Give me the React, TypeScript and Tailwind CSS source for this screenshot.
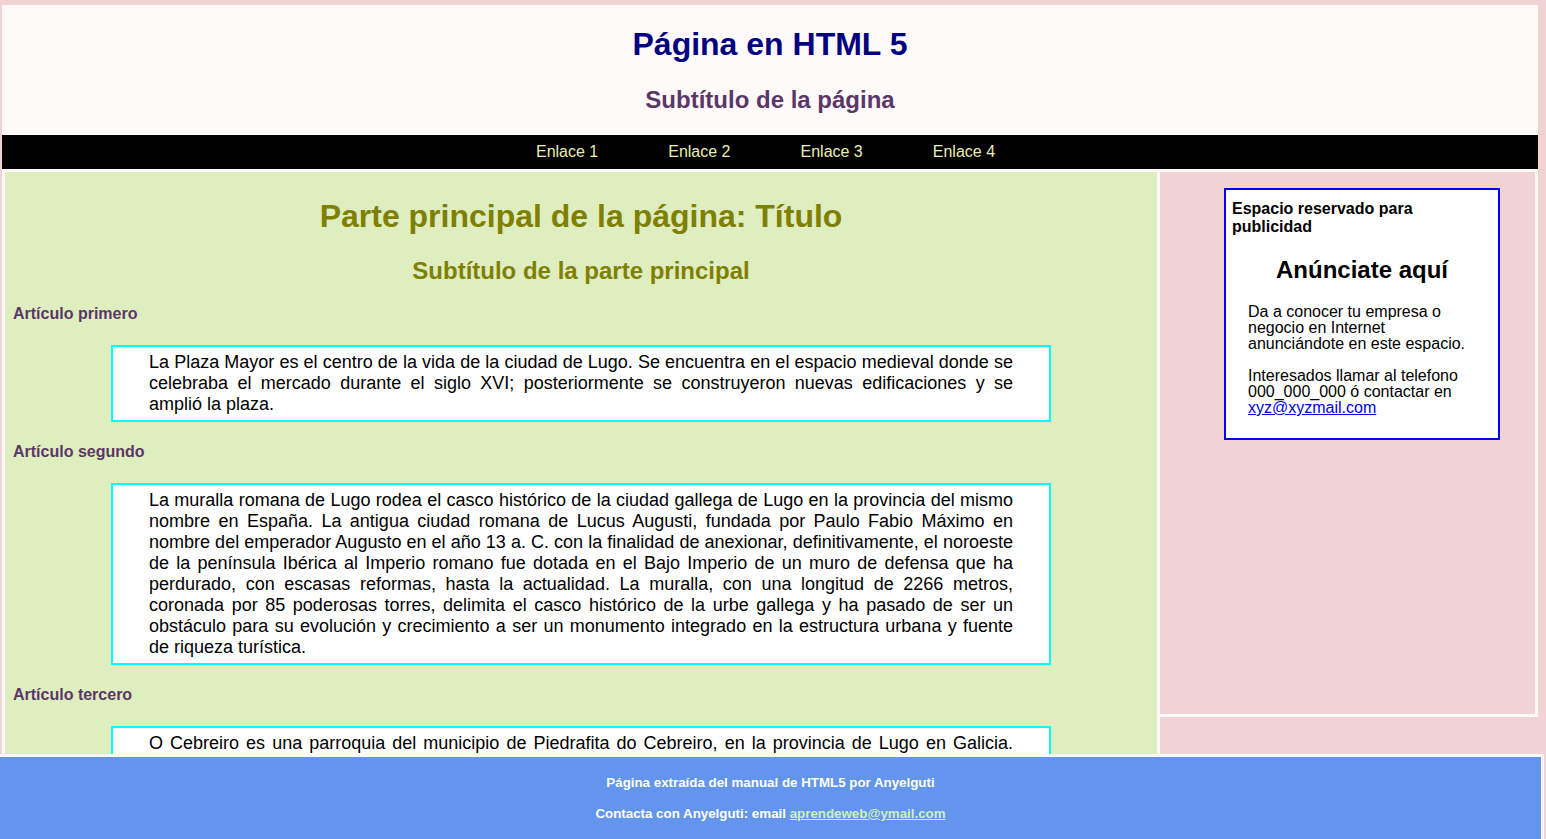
const articles = [
  {
    title: "Artículo primero",
    body: "La Plaza Mayor es el centro de la vida de la ciudad de Lugo. Se encuentra en el espacio medieval donde se celebraba el mercado durante el siglo XVI; posteriormente se construyeron nuevas edificaciones y se amplió la plaza.",
  },
  {
    title: "Artículo segundo",
    body: "La muralla romana de Lugo rodea el casco histórico de la ciudad gallega de Lugo en la provincia del mismo nombre en España. La antigua ciudad romana de Lucus Augusti, fundada por Paulo Fabio Máximo en nombre del emperador Augusto en el año 13 a. C. con la finalidad de anexionar, definitivamente, el noroeste de la península Ibérica al Imperio romano fue dotada en el Bajo Imperio de un muro de defensa que ha perdurado, con escasas reformas, hasta la actualidad. La muralla, con una longitud de 2266 metros, coronada por 85 poderosas torres, delimita el casco histórico de la urbe gallega y ha pasado de ser un obstáculo para su evolución y crecimiento a ser un monumento integrado en la estructura urbana y fuente de riqueza turística.",
  },
  {
    title: "Artículo tercero",
    body: "O Cebreiro es una parroquia del municipio de Piedrafita do Cebreiro, en la provincia de Lugo en Galicia. Situada a 1300 metros de altitud, es el punto de entrada del Camino de Santiago francés en tierras gallegas y conserva sus antiguas pallozas prerromanas.",
  },
];

const links = ["Enlace 1", "Enlace 2", "Enlace 3", "Enlace 4"];

export default function App(): React.ReactElement {
  return (
    <div className="relative h-[839px] overflow-hidden bg-[#f2d3d3] pt-[5px] pl-[2px] font-['Liberation_Sans',Arial,sans-serif]">
      <div className="w-[1536px]">
        <header className="h-[130px] bg-[#fffafa] flex flex-col items-center">
          <h1 className="mt-[21px] text-[32px] leading-[37px] font-bold text-[#000080]">
            Página en HTML 5
          </h1>
          <h2 className="mt-[23px] text-[24px] leading-[28px] font-bold text-[#5b3768]">
            Subtítulo de la página
          </h2>
        </header>

        <nav className="h-[34px] bg-black flex items-center justify-center gap-[70px] pr-[9px]">
          {links.map((l) => (
            <a key={l} href="#" className="text-[16px] leading-[18px] text-[#e8efb4]">
              {l}
            </a>
          ))}
        </nav>

        <div className="flex items-start">
          <section className="w-[1158px] border-[3px] border-[#fffafa] bg-[#dfeebf] pb-[40px]">
            <h1 className="mt-[26px] text-center text-[32px] leading-[37px] font-bold text-[#808000]">
              Parte principal de la página: Título
            </h1>
            <h2 className="mt-[22px] text-center text-[24px] leading-[28px] font-bold text-[#808000]">
              Subtítulo de la parte principal
            </h2>
            {articles.map((a, i) => (
              <article key={a.title}>
                <h3
                  className={
                    (i === 0 ? "mt-[20px]" : "mt-[21px]") +
                    " mb-[22px] ml-[8px] text-[16px] leading-[18px] font-bold text-[#5b3768]"
                  }
                >
                  {a.title}
                </h3>
                <p className="mx-auto w-[940px] border-2 border-[#00ffff] bg-white px-[36px] pt-[5px] pb-[5px] text-[18px] leading-[21px] text-justify text-black">
                  {a.body}
                </p>
              </article>
            ))}
          </section>

          <aside className="w-[378px] h-[548px] border-y-[3px] border-r-[3px] border-[#fffafa] bg-[#f2d3d3]">
            <div className="ml-[64px] mt-[16px] w-[276px] border-2 border-[#0000ff] bg-white pb-[22px] text-black">
              <h3 className="pt-[10px] pl-[6px] pr-[6px] text-[16px] leading-[18px] font-bold">
                Espacio reservado para publicidad
              </h3>
              <h2 className="mt-[20px] text-center text-[24px] leading-[28px] font-bold">
                Anúnciate aquí
              </h2>
              <div className="mt-[20px] px-[22px] text-[16px] leading-[16px]">
                <p>Da a conocer tu empresa o negocio en Internet anunciándote en este espacio.</p>
                <p className="mt-[16px]">
                  Interesados llamar al telefono 000_000_000 ó contactar en{" "}
                  <a href="#" className="text-[#0000ee] underline">
                    xyz@xyzmail.com
                  </a>
                </p>
              </div>
            </div>
          </aside>
        </div>
      </div>

      <footer className="absolute bottom-0 left-0 w-[1544px] h-[85px] border-t-[3px] border-r-[3px] border-[#fffafa] bg-[#6495ed] pt-[18px] text-center text-[13.33px] leading-[15px] font-bold text-white">
        <p>Página extraída del manual de HTML5 por Anyelguti</p>
        <p className="mt-[16px]">
          Contacta con Anyelguti: email{" "}
          <a href="#" className="text-[#cdf0bd] underline">
            aprendeweb@ymail.com
          </a>
        </p>
      </footer>
    </div>
  );
}
